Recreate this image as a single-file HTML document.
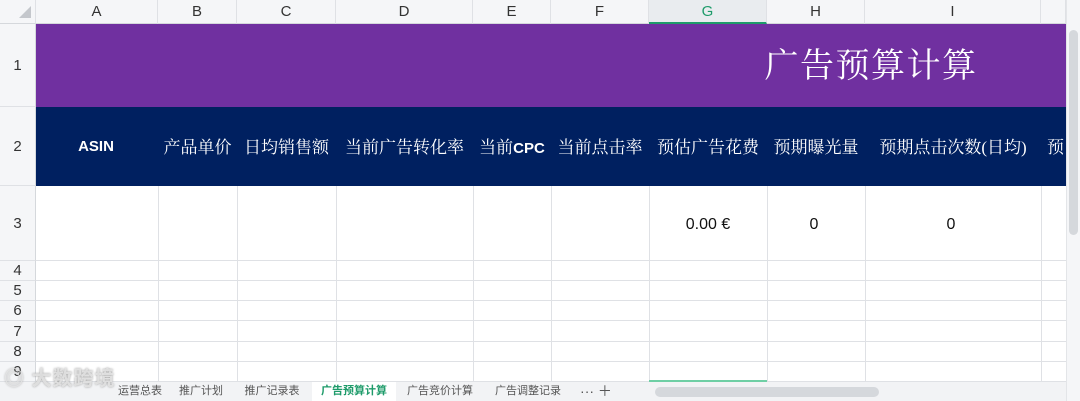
<!DOCTYPE html><html><head><meta charset="utf-8"><style>
*{margin:0;padding:0;box-sizing:border-box}
body{width:1080px;height:401px;overflow:hidden;background:#fff;font-family:"Liberation Sans","Noto Sans CJK SC",sans-serif;position:relative}
.a{position:absolute}
.ch{top:0;height:24px;background:#f5f6f8;border-right:1px solid #dfe1e5;border-bottom:1px solid #d5d8dc;font-size:15px;color:#333;text-align:center;line-height:24px}
.rh{left:0;width:36px;background:#f5f6f8;border-bottom:1px solid #dfe1e5;border-right:1px solid #d5d8dc;font-size:15px;color:#333;text-align:center}
.vl{top:24px;width:1px;height:357px;background:#dfe1e5}
.hl{left:36px;width:1030px;height:1px;background:#dfe1e5}
.hd{top:107px;height:79px;line-height:82px;color:#fff;font-family:"Liberation Serif","Noto Serif CJK SC",serif;font-size:17px;text-align:center;white-space:nowrap;overflow:hidden}
.tab{top:382px;height:19px;font-size:11px;color:#555;line-height:19px;text-align:center}
</style></head><body>
<div class="a ch" style="left:0;width:36px"></div>
<div class="a" style="left:19px;top:6px;width:0;height:0;border-left:12px solid transparent;border-bottom:12px solid #c4c7cc"></div>
<div class="a ch" style="left:36px;width:122px">A</div>
<div class="a ch" style="left:158px;width:79px">B</div>
<div class="a ch" style="left:237px;width:99px">C</div>
<div class="a ch" style="left:336px;width:137px">D</div>
<div class="a ch" style="left:473px;width:78px">E</div>
<div class="a ch" style="left:551px;width:98px">F</div>
<div class="a ch" style="left:649px;width:118px;background:#e9ecef;color:#1e9b6a;border-bottom:2px solid #1e9b6a">G</div>
<div class="a ch" style="left:767px;width:98px">H</div>
<div class="a ch" style="left:865px;width:176px">I</div>
<div class="a ch" style="left:1041px;width:25px"></div>

<div class="a rh" style="top:24px;height:83px;line-height:83px">1</div>
<div class="a rh" style="top:107px;height:79px;line-height:79px">2</div>
<div class="a rh" style="top:186px;height:75px;line-height:75px">3</div>
<div class="a rh" style="top:261px;height:20px;line-height:20px">4</div>
<div class="a rh" style="top:281px;height:20px;line-height:20px">5</div>
<div class="a rh" style="top:301px;height:20px;line-height:20px">6</div>
<div class="a rh" style="top:321px;height:21px;line-height:21px">7</div>
<div class="a rh" style="top:342px;height:20px;line-height:20px">8</div>
<div class="a rh" style="top:362px;height:20px;line-height:20px">9</div>

<div class="a vl" style="left:158px"></div><div class="a vl" style="left:237px"></div><div class="a vl" style="left:336px"></div><div class="a vl" style="left:473px"></div><div class="a vl" style="left:551px"></div><div class="a vl" style="left:649px"></div><div class="a vl" style="left:767px"></div><div class="a vl" style="left:865px"></div><div class="a vl" style="left:1041px"></div>
<div class="a hl" style="top:260px"></div><div class="a hl" style="top:280px"></div><div class="a hl" style="top:300px"></div><div class="a hl" style="top:320px"></div><div class="a hl" style="top:341px"></div><div class="a hl" style="top:361px"></div><div class="a hl" style="top:381px"></div>

<div class="a" style="left:36px;top:24px;width:1030px;height:83px;background:#7030a0"></div>
<div class="a" style="left:649px;top:24px;width:444px;height:83px;line-height:86px;text-align:center;color:#fff;font-family:'Liberation Serif','Noto Serif CJK SC',serif;font-size:34px;letter-spacing:1.5px">广告预算计算</div>
<div class="a" style="left:36px;top:107px;width:1030px;height:79px;background:#002060"></div>
<div class="a hd" style="left:36px;width:122px;font-family:'Liberation Sans',sans-serif;font-weight:bold;font-size:15px;padding-right:2px;line-height:80px">ASIN</div>
<div class="a hd" style="left:158px;width:79px">产品单价</div>
<div class="a hd" style="left:237px;width:99px">日均销售额</div>
<div class="a hd" style="left:336px;width:137px">当前广告转化率</div>
<div class="a hd" style="left:473px;width:78px">当前<b style="font-family:'Liberation Sans',sans-serif;font-size:15px">CPC</b></div>
<div class="a hd" style="left:551px;width:98px">当前点击率</div>
<div class="a hd" style="left:649px;width:118px">预估广告花费</div>
<div class="a hd" style="left:767px;width:98px">预期曝光量</div>
<div class="a hd" style="left:865px;width:176px">预期点击次数(日均)</div>
<div class="a hd" style="left:1047px;width:19px;text-align:left">预</div>

<div class="a" style="left:649px;top:188px;width:118px;height:74px;line-height:74px;text-align:center;font-size:16px;color:#111">0.00 €</div>
<div class="a" style="left:767px;top:188px;width:94px;height:74px;line-height:74px;text-align:center;font-size:16px;color:#111">0</div>
<div class="a" style="left:865px;top:188px;width:172px;height:74px;line-height:74px;text-align:center;font-size:16px;color:#111">0</div>

<div class="a" style="left:1066px;top:0;width:14px;height:401px;background:#f5f6f8;border-left:1px solid #e3e5e8"></div>
<div class="a" style="left:1069px;top:30px;width:9px;height:205px;background:#d5d8dc;border-radius:5px"></div>

<div class="a" style="left:0;top:381px;width:1066px;height:20px;background:#f2f3f5;border-top:1px solid #dfe1e5"></div>
<div class="a" style="left:4px;top:362px;font-size:20px;color:rgba(230,230,230,0.85);font-weight:bold;text-shadow:0 0 2px #999;letter-spacing:1px">◎ 大数跨境</div>
<div class="a tab" style="left:110px;width:60px">运营总表</div>
<div class="a tab" style="left:170px;width:62px">推广计划</div>
<div class="a tab" style="left:232px;width:80px">推广记录表</div>
<div class="a tab" style="left:312px;width:84px;background:#fff;color:#1e9b6a;font-weight:bold">广告预算计算</div>
<div class="a tab" style="left:396px;width:88px">广告竞价计算</div>
<div class="a tab" style="left:484px;width:88px">广告调整记录</div>
<div class="a tab" style="left:576px;width:40px;font-size:14px">··· ＋</div>
<div class="a" style="left:649px;top:380px;width:118px;height:2px;background:#6fcfa5"></div>
<div class="a" style="left:655px;top:387px;width:224px;height:10px;background:#d5d8dc;border-radius:5px"></div>
</body></html>
